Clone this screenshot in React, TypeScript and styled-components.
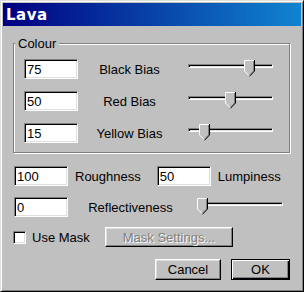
import React from 'react'
import styled, { createGlobalStyle, css } from 'styled-components'

const GlobalStyle = createGlobalStyle`
	html, body {
		margin: 0;
		padding: 0;
		background: #c0c0c0;
	}
	body {
		font-family: "Liberation Sans", Arial, sans-serif;
		font-size: 13px;
		color: #000;
	}
`

type SliderProps = { track: number; value: number }

function Slider({ track, value }: SliderProps) {
	// thumb center travels from track start + 5 to track end - 5
	const left = 2 + 5 + (value / 100) * (track - 10) - 5.5
	return (
		<SliderBox style={{ width: track + 4 }}>
			<Track style={{ width: track }} />
			<ThumbWrap style={{ left }}>
				<svg width="11" height="17" viewBox="0 0 11 17">
					<polygon points="0,0 11,0 11,11 5.5,16.5 0,11" fill="#c0c0c0" />
					<polyline points="0.5,11 0.5,0.5 10,0.5" fill="none" stroke="#fff" strokeWidth="1" />
					<line x1="0.5" y1="11" x2="5" y2="15.5" stroke="#fff" strokeWidth="1" />
					<polyline points="9.5,1 9.5,11 5.5,15" fill="none" stroke="#808080" strokeWidth="1" />
					<polyline points="10.5,0 10.5,11 5.5,16.3" fill="none" stroke="#000" strokeWidth="1" />
				</svg>
			</ThumbWrap>
		</SliderBox>
	)
}

const biasRows = [
	{ label: 'Black Bias', value: 75 },
	{ label: 'Red Bias', value: 50 },
	{ label: 'Yellow Bias', value: 15 },
]

function App() {
	const [useMask, setUseMask] = React.useState<boolean>(false)

	return (
		<>
			<GlobalStyle />
			<Window>
				<TitleBar>
					<Title>Lava</Title>
				</TitleBar>
				<Body>
					<Group>
						<Legend>Colour</Legend>
						<GroupInner>
							{biasRows.map((row) => (
								<Row key={row.label}>
									<TextBox defaultValue={String(row.value)} />
									<CenterLabel width={103}>{row.label}</CenterLabel>
									<Spacer width={5} />
									<Slider track={85} value={row.value} />
								</Row>
							))}
						</GroupInner>
					</Group>

					<Row indent>
						<TextBox defaultValue="100" />
						<Label>Roughness</Label>
						<Spacer width={16} />
						<TextBox defaultValue="50" />
						<Label>Lumpiness</Label>
					</Row>

					<Row indent spaced>
						<TextBox defaultValue="0" />
						<CenterLabel width={125}>Reflectiveness</CenterLabel>
						<Spacer width={2} />
						<Slider track={86} value={0} />
					</Row>

					<MaskRow>
						<CheckLabel>
							<CheckBox
								type="checkbox"
								checked={useMask}
								onChange={(e) => setUseMask(e.target.checked)}
							/>
							Use Mask
						</CheckLabel>
						<Button width={128} disabled>
							Mask Settings...
						</Button>
					</MaskRow>

					<Footer>
						<Button width={66}>Cancel</Button>
						<Button width={59} isDefault>
							OK
						</Button>
					</Footer>
				</Body>
			</Window>
		</>
	)
}

const Window = styled.div`
	box-sizing: border-box;
	width: 304px;
	height: 292px;
	display: flex;
	flex-direction: column;
	background: #c0c0c0;
	border: 1px solid;
	border-color: #dfdfdf #000 #000 #dfdfdf;
	box-shadow: inset 1px 1px #fff, inset -1px -1px #808080;
	padding: 2px;
`

const TitleBar = styled.div`
	height: 23px;
	display: flex;
	align-items: center;
	padding-left: 3px;
	background: linear-gradient(90deg, #000080, #1084d0);
`

const Title = styled.span`
	font-family: "DejaVu Sans", Verdana, sans-serif;
	font-weight: bold;
	font-size: 15px;
	letter-spacing: 0.5px;
	color: #fff;
`

const Body = styled.div`
	display: flex;
	flex-direction: column;
	padding: 10px 11px 0 10px;
`

const Group = styled.fieldset`
	margin: 0;
	padding: 0;
	min-width: 0;
	height: 117px;
	box-sizing: border-box;
	border: 1px solid #808080;
	box-shadow: inset 1px 1px #fff, 1px 1px #fff;
`

const Legend = styled.legend`
	margin-left: 1px;
	padding: 0 3px;
	line-height: 15px;
	height: 15px;
	background: #c0c0c0;
`

const GroupInner = styled.div`
	display: flex;
	flex-direction: column;
	gap: 12px;
	padding: 8px 0 0 10px;
`

const Row = styled('div')<{ indent?: boolean; spaced?: boolean }>`
	display: flex;
	align-items: center;
	height: 20px;

	${(props) =>
		props.indent &&
		css`
			margin-left: 1px;
			margin-top: 13px;
		`}

	${(props) =>
		props.spaced &&
		css`
			margin-top: 11px;
		`}
`

const TextBox = styled.input`
	box-sizing: border-box;
	width: 54px;
	height: 20px;
	margin: 0;
	padding: 0 0 0 2px;
	font-family: "Liberation Sans", Arial, sans-serif;
	font-size: 13px;
	color: #000;
	background: #fff;
	border: 1px solid;
	border-color: #808080 #fff #fff #808080;
	box-shadow: inset 1px 1px #000, inset -1px -1px #dfdfdf;
	outline: none;
`

const Label = styled.span`
	margin-left: 7px;
	white-space: nowrap;
`

const CenterLabel = styled('span')<{ width: number }>`
	width: ${(props) => props.width}px;
	text-align: center;
	white-space: nowrap;
`

const Spacer = styled('div')<{ width: number }>`
	width: ${(props) => props.width}px;
	flex: none;
`

const SliderBox = styled.div`
	position: relative;
	height: 20px;
	flex: none;
`

const Track = styled.div`
	box-sizing: border-box;
	position: absolute;
	left: 2px;
	top: 5px;
	height: 4px;
	border: 1px solid;
	border-color: #808080 #fff #fff #808080;
	box-shadow: inset 1px 1px #000, inset -1px -1px #dfdfdf;
`

const ThumbWrap = styled.div`
	position: absolute;
	top: 1px;
	width: 11px;
	height: 17px;

	svg {
		display: block;
	}
`

const MaskRow = styled.div`
	display: flex;
	align-items: center;
	margin-top: 10px;
	height: 20px;
`

const CheckLabel = styled.label`
	width: 92px;
	display: flex;
	align-items: center;
	gap: 6px;
	white-space: nowrap;
`

const CheckBox = styled.input`
	appearance: none;
	box-sizing: border-box;
	width: 13px;
	height: 13px;
	margin: 0;
	background: #fff;
	border: 1px solid;
	border-color: #808080 #fff #fff #808080;
	box-shadow: inset 1px 1px #000, inset -1px -1px #dfdfdf;

	&:checked {
		background: #fff
			url("data:image/svg+xml,%3Csvg xmlns='http://www.w3.org/2000/svg' width='11' height='11'%3E%3Cpath d='M2 4l2 2 4-4v2l-4 4-2-2z' fill='black'/%3E%3C/svg%3E")
			center / 11px 11px no-repeat;
	}
`

const Button = styled('button')<{ width: number; isDefault?: boolean }>`
	box-sizing: border-box;
	width: ${(props) => props.width}px;
	height: 20px;
	margin: 0;
	padding: 0;
	font-family: "Liberation Sans", Arial, sans-serif;
	font-size: 13px;
	color: #000;
	background: #c0c0c0;
	border: 1px solid;
	border-color: #fff #000 #000 #fff;
	box-shadow: inset -1px -1px #808080, inset 1px 1px #dfdfdf;

	${(props) =>
		props.isDefault &&
		css`
			border: 1px solid #000;
			box-shadow: inset 1px 1px #fff, inset -1px -1px #000, inset -2px -2px #808080;
		`}

	&:disabled {
		color: #808080;
		text-shadow: 1px 1px #fff;
	}
`

const Footer = styled.div`
	display: flex;
	justify-content: flex-end;
	gap: 10px;
	margin-top: 12px;
	height: 21px;

	& > button {
		height: 21px;
	}
`

export default App
